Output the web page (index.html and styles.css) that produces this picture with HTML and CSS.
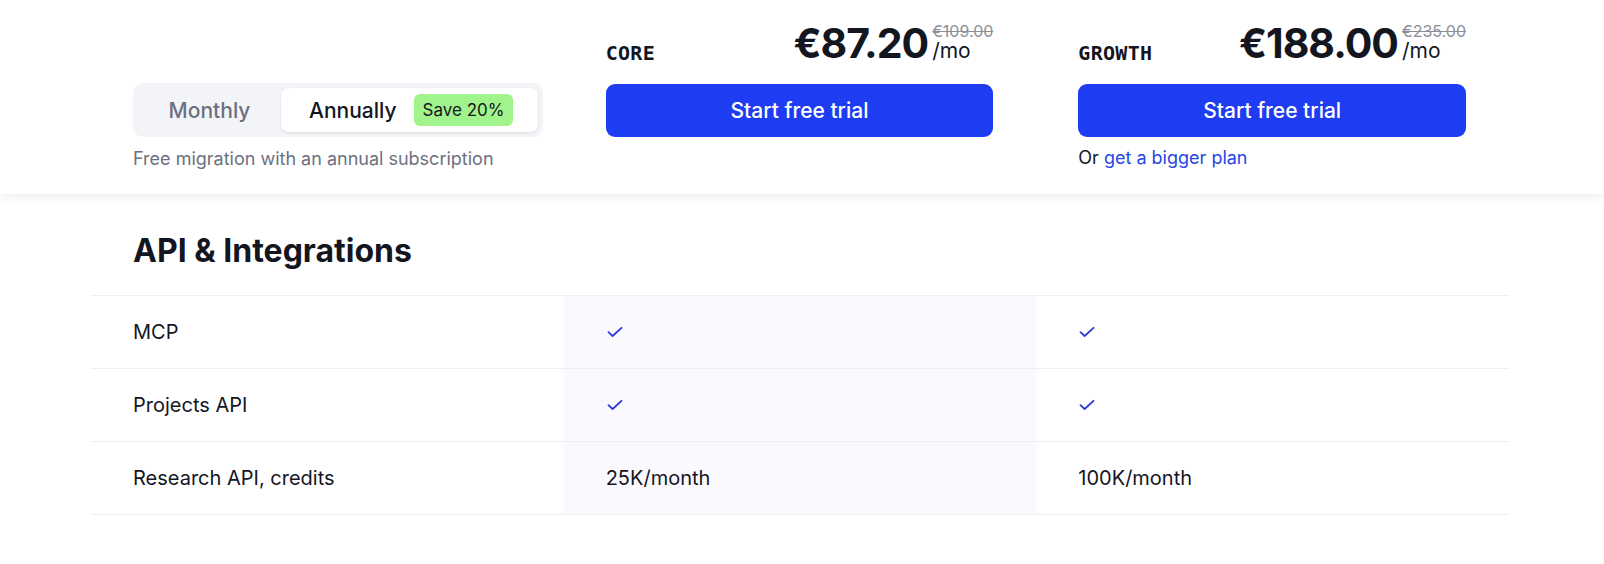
FILE: index.html
```html
<!DOCTYPE html>
<html lang="en">
<head>
<meta charset="utf-8">
<title>Pricing</title>
<link rel="stylesheet" href="styles.css">
</head>
<body>
<header class="top">
  <div class="grid">
    <div class="col billing">
      <div class="toggle">
        <div class="seg">Monthly</div>
        <div class="seg active">Annually <span class="badge">Save 20%</span></div>
      </div>
      <p class="note">Free migration with an annual subscription</p>
    </div>
    <div class="col plan">
      <div class="plan-head">
        <span class="plan-name">CORE</span>
        <div class="price">
          <span class="amount">€87.20</span>
          <span class="per"><s class="old">€109.00</s><span class="mo">/mo</span></span>
        </div>
      </div>
      <a class="btn" href="#">Start free trial</a>
    </div>
    <div class="col plan">
      <div class="plan-head">
        <span class="plan-name">GROWTH</span>
        <div class="price">
          <span class="amount">€188.00</span>
          <span class="per"><s class="old">€235.00</s><span class="mo">/mo</span></span>
        </div>
      </div>
      <a class="btn" href="#">Start free trial</a>
      <p class="more">Or <a href="#">get a bigger plan</a></p>
    </div>
  </div>
</header>

<main class="features">
  <h2 class="section-title">API &amp; Integrations</h2>
  <div class="table">
    <div class="row">
      <div class="cell label">MCP</div>
      <div class="cell core"><svg class="check" viewBox="0 0 16 12" width="16" height="12"><path d="M1.5 6.2 5.6 10 14.5 1.8"/></svg></div>
      <div class="cell"><svg class="check" viewBox="0 0 16 12" width="16" height="12"><path d="M1.5 6.2 5.6 10 14.5 1.8"/></svg></div>
    </div>
    <div class="row">
      <div class="cell label">Projects API</div>
      <div class="cell core"><svg class="check" viewBox="0 0 16 12" width="16" height="12"><path d="M1.5 6.2 5.6 10 14.5 1.8"/></svg></div>
      <div class="cell"><svg class="check" viewBox="0 0 16 12" width="16" height="12"><path d="M1.5 6.2 5.6 10 14.5 1.8"/></svg></div>
    </div>
    <div class="row">
      <div class="cell label">Research API, credits</div>
      <div class="cell core">25K/month</div>
      <div class="cell">100K/month</div>
    </div>
  </div>
</main>
</body>
</html>
```

FILE: styles.css
```css
* { box-sizing: border-box; }

body {
  margin: 0;
  background: #ffffff;
  font-family: Inter, "Noto Sans", sans-serif;
  color: #14161f;
}

.top {
  height: 194px;
  background: #ffffff;
  box-shadow: 0 3px 10px rgba(20, 22, 40, 0.07);
  padding-top: 20px;
  position: relative;
}

.grid {
  width: 1418px;
  margin-left: 91px;
  display: grid;
  grid-template-columns: repeat(3, minmax(0, 1fr));
}

.col {
  padding: 0 43px 0 42px;
}

.billing {
  padding-top: 63px;
}

.toggle {
  width: 410px;
  height: 54px;
  padding: 5px;
  border-radius: 10px;
  background: #f3f4f7;
  display: flex;
}

.seg {
  width: 143px;
  display: flex;
  align-items: center;
  justify-content: center;
  font-size: 21px;
  font-weight: 500;
  color: #6b7180;
}

.seg.active {
  flex: 1;
  justify-content: flex-start;
  padding-left: 28px;
  gap: 17px;
  background: #ffffff;
  border-radius: 8px;
  box-shadow: 0 1px 3px rgba(20, 22, 40, 0.1);
  color: #14161f;
}

.badge {
  height: 32px;
  padding: 0 9px;
  display: inline-flex;
  align-items: center;
  border-radius: 6px;
  background: #a1f38c;
  font-size: 17px;
  font-weight: 400;
  color: #14161f;
}

.note {
  margin: 10px 0 0;
  font-size: 18px;
  line-height: 24px;
  color: #6b7180;
  white-space: nowrap;
}

.plan-head {
  height: 44px;
  display: flex;
  justify-content: space-between;
  align-items: flex-end;
}

.plan-name {
  font-family: "DejaVu Sans Mono", "Liberation Mono", monospace;
  font-weight: 700;
  font-size: 20px;
  line-height: 20px;
  letter-spacing: 0.3px;
  margin-bottom: 1px;
}

.price {
  display: flex;
  align-items: flex-end;
  gap: 4px;
}

.amount {
  font-size: 41px;
  font-weight: 700;
  letter-spacing: -1px;
  line-height: 41px;
}

.per {
  display: flex;
  flex-direction: column;
  align-items: flex-start;
}

.old {
  font-size: 16px;
  line-height: 18px;
  color: #8a8f9a;
}

.mo {
  font-size: 21px;
  line-height: 22px;
  margin-bottom: 2px;
}

.btn {
  margin-top: 20px;
  height: 53px;
  display: flex;
  align-items: center;
  justify-content: center;
  border-radius: 9px;
  background: #1e3cf2;
  color: #ffffff;
  font-size: 21px;
  font-weight: 500;
  text-decoration: none;
}

.more {
  margin: 9px 0 0;
  font-size: 18px;
  line-height: 24px;
  color: #14161f;
}

.more a {
  color: #2446e3;
  text-decoration: none;
}

.features {
  width: 1418px;
  margin-left: 91px;
  padding-top: 39px;
}

.section-title {
  margin: 0 0 26px;
  padding-left: 42px;
  font-size: 32px;
  line-height: 36px;
  font-weight: 700;
}

.table {
  border-top: 1px solid #eeeff2;
}

.row {
  display: grid;
  grid-template-columns: repeat(3, minmax(0, 1fr));
  border-bottom: 1px solid #eeeff2;
}

.cell {
  height: 72px;
  padding: 0 42px;
  display: flex;
  align-items: center;
  font-size: 20px;
}

.cell.core {
  background: #fafafe;
}

.check {
  fill: none;
  stroke: #2b3bd4;
  stroke-width: 1.8;
  stroke-linecap: round;
  stroke-linejoin: round;
  margin-left: 1px;
}
```
